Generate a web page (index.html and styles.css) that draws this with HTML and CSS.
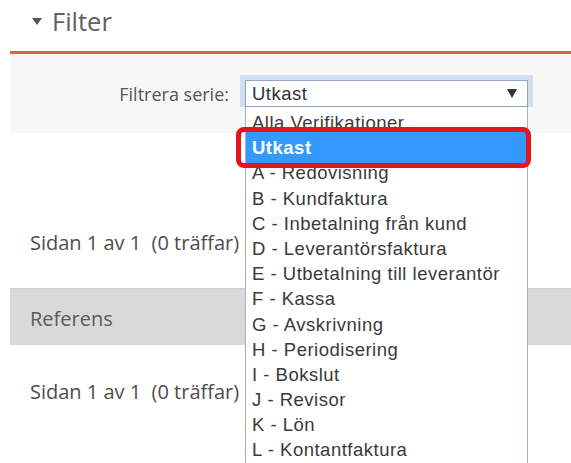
FILE: index.html
```html
<!DOCTYPE html>
<html lang="sv">
<head>
<meta charset="utf-8">
<title>Verifikationer</title>
<link rel="stylesheet" href="styles.css">
</head>
<body>
  <section class="filter">
    <h2 class="filter-title">
      <svg class="caret" width="10" height="8" viewBox="0 0 10 8"><polygon points="0,0 10,0 5,7" /></svg>
      <span>Filter</span>
    </h2>
    <div class="filter-panel">
      <div class="field">
        <label class="field-label">Filtrera serie:</label>
        <div class="select-wrap">
          <div class="select">
            <span>Utkast</span>
            <svg class="select-arrow" width="10" height="9" viewBox="0 0 10 9"><polygon points="0,0 10,0 5,9" /></svg>
          </div>
          <ul class="options">
            <li>Alla Verifikationer</li>
            <li class="is-selected">Utkast</li>
            <li>A - Redovisning</li>
            <li>B - Kundfaktura</li>
            <li>C - Inbetalning från kund</li>
            <li>D - Leverantörsfaktura</li>
            <li>E - Utbetalning till leverantör</li>
            <li>F - Kassa</li>
            <li>G - Avskrivning</li>
            <li>H - Periodisering</li>
            <li>I - Bokslut</li>
            <li>J - Revisor</li>
            <li>K - Lön</li>
            <li>L - Kontantfaktura</li>
          </ul>
          <div class="callout"></div>
        </div>
      </div>
    </div>
  </section>

  <section class="results">
    <p class="pager pager-top">Sidan 1 av 1&nbsp; (0 träffar)</p>
    <div class="table-head">Referens</div>
    <p class="pager pager-bottom">Sidan 1 av 1&nbsp; (0 träffar)</p>
  </section>
</body>
</html>
```

FILE: styles.css
```css
* {
  box-sizing: border-box;
}

html, body {
  margin: 0;
  padding: 0;
  background: #ffffff;
  overflow: hidden;
}

body {
  width: 571px;
  height: 463px;
  font-family: "Open Sans", "Noto Sans", sans-serif;
  color: #555555;
}

/* ---- filter header ---- */
.filter {
  padding-left: 10px;
}

.filter-title {
  margin: 0;
  height: 54px;
  display: flex;
  align-items: center;
  gap: 10px;
  padding: 0 0 9px 22px;
  font-size: 25.5px;
  font-weight: 400;
  color: #606060;
  border-bottom: 3px solid #d0693a;
}

.caret {
  fill: #555555;
  margin-top: 2px;
}

.filter-panel {
  background: #f7f7f7;
  padding: 26px 0 26px 0;
}

.field {
  display: flex;
  align-items: center;
  gap: 16px;
}

.field-label {
  width: 219px;
  text-align: right;
  font-size: 18px;
  color: #555555;
}

/* ---- select with open list ---- */
.select-wrap {
  position: relative;
  width: 283px;
}

.select {
  height: 27px;
  display: flex;
  align-items: center;
  justify-content: space-between;
  padding: 0 10px 0 6px;
  background: #ffffff;
  border: 1px solid #8ea3c6;
  font-family: "Liberation Sans", Arial, sans-serif;
  font-size: 18.5px;
  letter-spacing: 0.5px;
  color: #333333;
  box-shadow: 0 0 0 5px #d3def0;
  clip-path: inset(-6px -6px 0 -6px);
}

.select-arrow {
  fill: #333333;
}

.options {
  position: absolute;
  top: 100%;
  left: 0;
  z-index: 2;
  width: 283px;
  height: 380px;
  margin: 0;
  padding: 3px 0 0 0;
  list-style: none;
  background: #ffffff;
  border: 1px solid #a3b2cb;
  border-top: none;
  font-family: "Liberation Sans", Arial, sans-serif;
  font-size: 18.5px;
  letter-spacing: 0.5px;
  color: #3a3a3a;
}

.options li {
  height: 25.2px;
  line-height: 25.2px;
  padding-left: 6px;
  white-space: nowrap;
}

.options li.is-selected {
  background: #3399ff;
  color: #ffffff;
  font-weight: 700;
  box-shadow: 0 -3px 0 #3399ff, 0 3px 0 #3399ff;
}

.callout {
  position: absolute;
  z-index: 3;
  left: -9px;
  top: 47px;
  width: 295px;
  height: 41px;
  border: 5px solid #e3161d;
  border-radius: 8px;
}

/* ---- results ---- */
.results {
  padding-left: 10px;
  display: flex;
  flex-direction: column;
}

.pager {
  margin: 0;
  padding-left: 20px;
  font-size: 20px;
  line-height: 24px;
  color: #4d4d4d;
}

.pager-top {
  margin-top: 98px;
}

.table-head {
  margin-top: 33px;
  height: 57px;
  display: flex;
  align-items: center;
  padding: 2px 0 0 20px;
  background: #d9d9d9;
  border-top: 1px solid #d0d0d0;
  font-size: 20px;
  color: #5a5a5a;
}

.pager-bottom {
  margin-top: 35px;
}
```
